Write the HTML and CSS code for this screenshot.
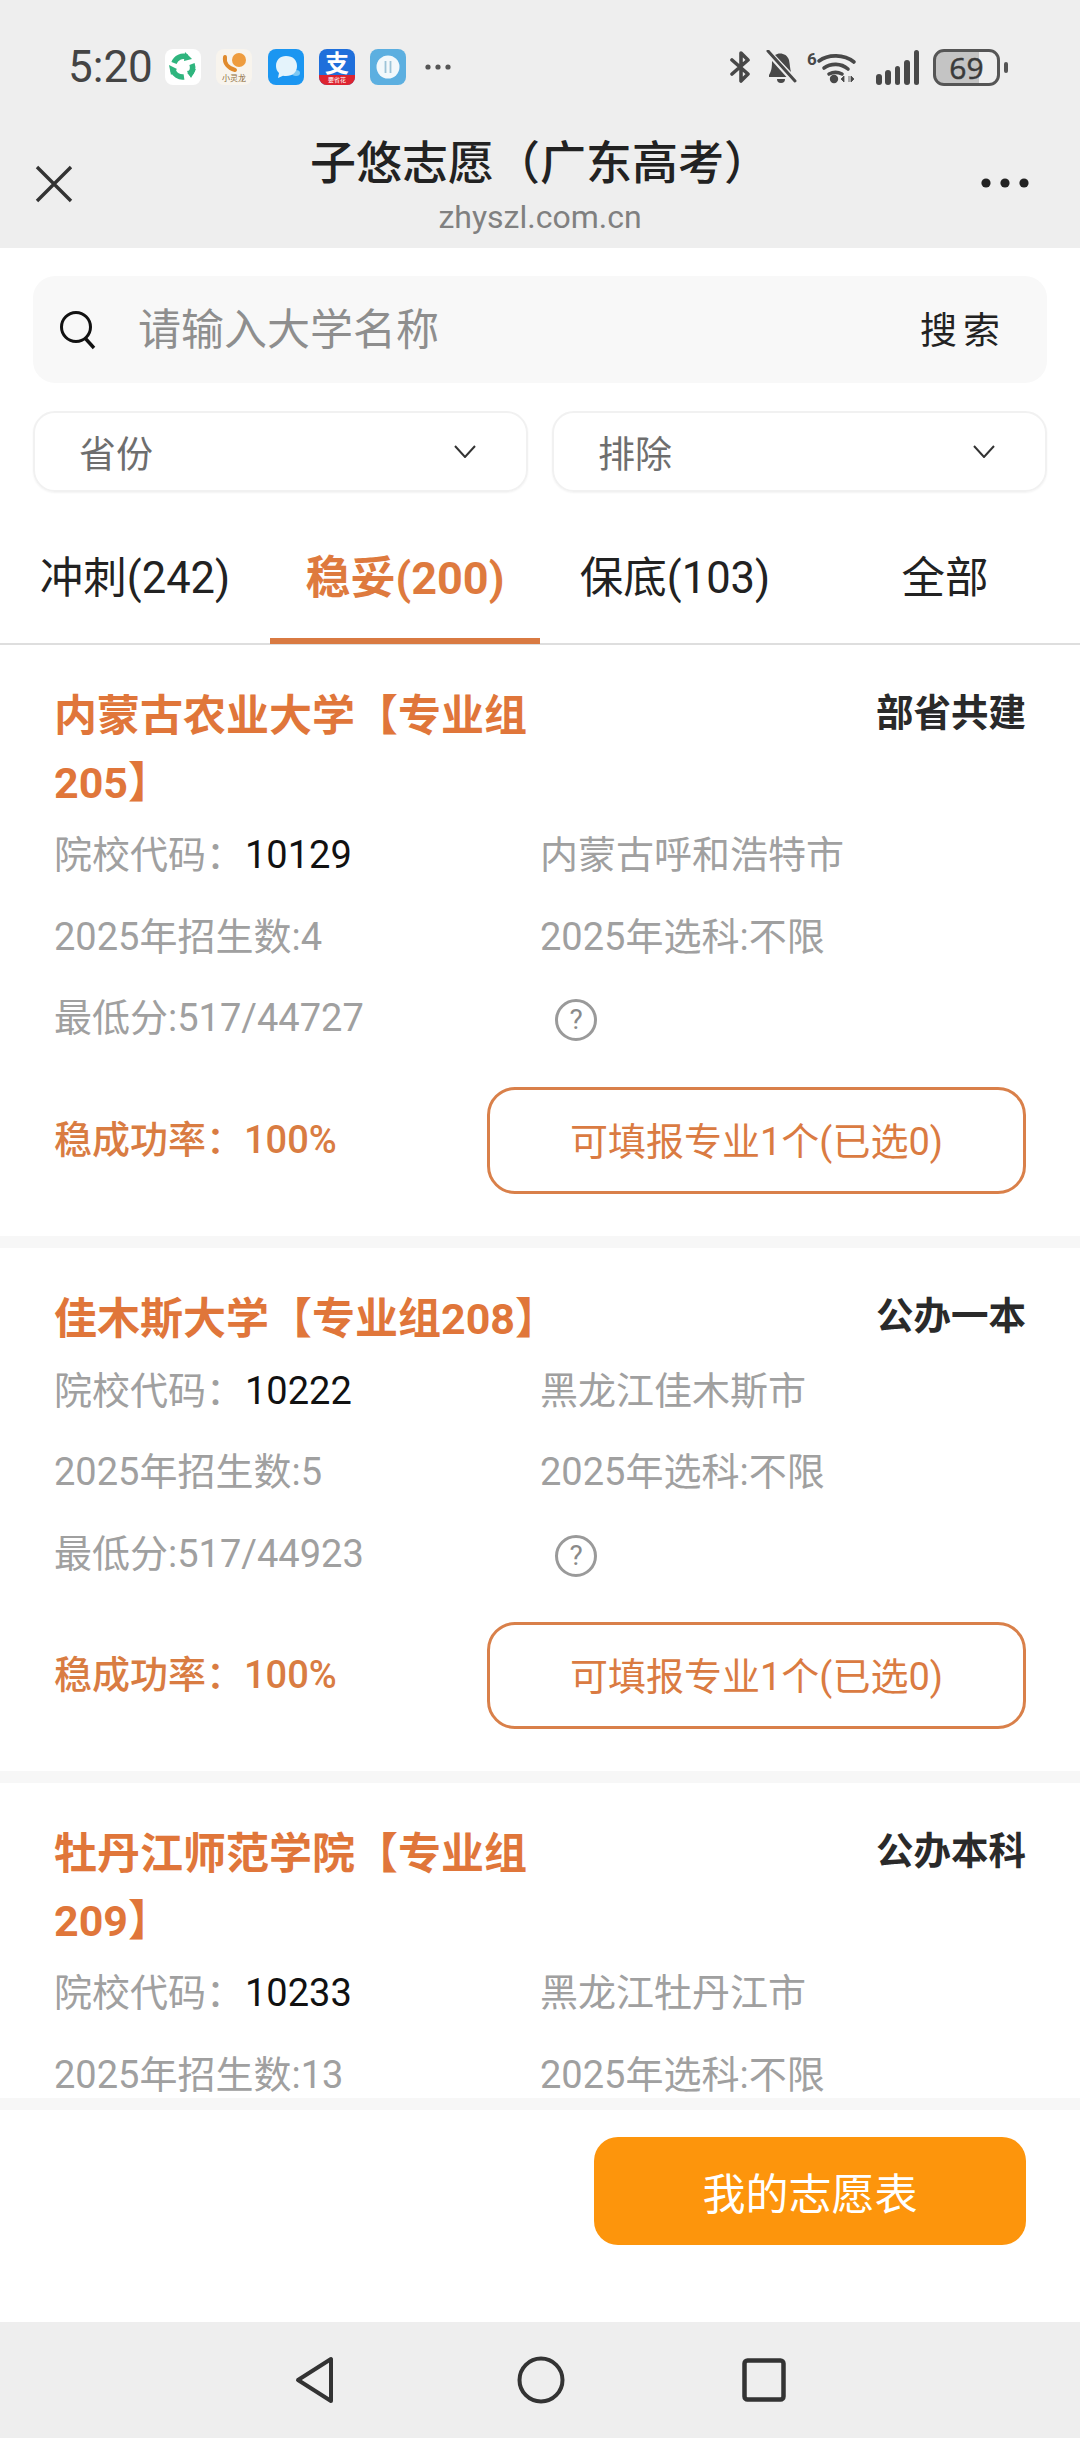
FILE: index.html
```html
<!DOCTYPE html>
<html lang="zh-CN">
<head>
    <meta charset="UTF-8">
    <meta name="viewport" content="width=device-width, initial-scale=1.0">
    <title>子悠志愿（广东高考）</title>
    <link rel="stylesheet" href="styles.css">
</head>
<body>
<div class="page">
    <header class="topbar">
        <div class="status">
            <span class="time">5:20</span>
            <div class="apps">
                <svg class="app" viewBox="0 0 36 36"><rect width="36" height="36" rx="8" fill="#fff"/><g fill="none" stroke="#2fb57e" stroke-width="5.5"><path d="M9 14a10 10 0 0 1 13-6"/><path d="M27 15a10 10 0 0 1-3 11"/><path d="M19 28a10 10 0 0 1-11-7"/></g><g fill="#2fb57e"><path d="M20 3l7 7-8 2z"/><path d="M31 20l-5 9-4-7z"/><path d="M6 26l-2-10 8 4z"/></g></svg>
                <svg class="app" viewBox="0 0 36 36"><rect width="36" height="36" rx="8" fill="#f8f4ed"/><circle cx="23" cy="11" r="7" fill="#ee9c3e"/><path d="M9 8c-1 6 3 11 10 13" fill="none" stroke="#e08a2c" stroke-width="4" stroke-linecap="round"/><text class="app-tiny" x="18" y="32">小灵龙</text></svg>
                <svg class="app" viewBox="0 0 36 36"><rect width="36" height="36" rx="8" fill="#1b96f1"/><ellipse cx="28" cy="24" rx="4" ry="3" fill="#7cc8f4"/><path d="M18 7c7 0 11 4 11 10s-4 10-11 10c-1 0-2 0-3-.3L10 29l1-5c-2-2-3-4-3-7C8 11 12 7 18 7z" fill="#e4f3fb"/></svg>
                <svg class="app" viewBox="0 0 36 36"><rect width="36" height="36" rx="8" fill="#1f6fdb"/><path d="M0 26h36v2a8 8 0 0 1-8 8H8a8 8 0 0 1-8-8z" fill="#dd2430"/><text class="app-zhi" x="18" y="23">支</text><text class="app-small" x="18" y="33">要省花</text></svg>
                <svg class="app" viewBox="0 0 36 36"><rect width="36" height="36" rx="8" fill="#5cafe0"/><circle cx="18" cy="18" r="11.5" fill="#f2f8fb"/><path d="M15.5 24V12M20.5 12v12" stroke="#9cc3d8" stroke-width="1.8"/></svg>
                <svg class="app-more" viewBox="0 0 26 6"><circle cx="3" cy="3" r="2.6"/><circle cx="13" cy="3" r="2.6"/><circle cx="23" cy="3" r="2.6"/></svg>
            </div>
            <div class="sys">
                <svg class="ic-bt" viewBox="0 0 24 32"><path d="M3 9l16 14-7 7V2l7 7L3 23" fill="none" stroke="#484848" stroke-width="3.6" stroke-linejoin="round" stroke-linecap="round"/></svg>
                <svg class="ic-bell" viewBox="0 0 32 34"><path d="M10 5c4-3 12-2 14 5 1 5 1 9 2 12z" fill="#484848"/><path d="M5 8l2 2c0 6 0 10-3 15v2h19z" fill="#484848"/><path d="M12 29h8a4 4 0 0 1-8 0z" fill="#484848"/><path d="M3 2l27 30" stroke="#eee" stroke-width="6"/><path d="M3 1l27 30" stroke="#484848" stroke-width="3" stroke-linecap="round"/></svg>
                <svg class="ic-wifi" viewBox="0 0 50 34"><text class="wifi-six" x="0" y="15">6</text><g fill="none" stroke="#484848" stroke-width="3.6" stroke-linecap="round"><path d="M12 11c9-7 25-7 35 1"/><path d="M17 18c7-5 17-5 24 1"/><path d="M22 24c4-2 9-2 13 0"/></g><circle cx="27" cy="29" r="4.2" fill="#484848"/><path d="M37 26v6l-3-3zM42 26v6M44 26v6l3-3z" fill="#484848" stroke="#484848" stroke-width=".8"/></svg>
                <div class="signal">
                    <i class="bar bar1"></i><i class="bar bar2"></i><i class="bar bar3"></i><i class="bar bar4"></i><i class="bar bar5"></i>
                </div>
                <div class="battery"><span class="battery-num">69</span></div>
                <i class="battery-nub"></i>
            </div>
        </div>
        <div class="titlebar">
            <svg class="ic-close" viewBox="0 0 38 38"><path d="M2 2l34 34M36 2L2 36" stroke="#333" stroke-width="3.4"/></svg>
            <div class="titles">
                <div class="title">子悠志愿（广东高考）</div>
                <div class="url">zhyszl.com.cn</div>
            </div>
            <svg class="ic-menu" viewBox="0 0 48 10"><circle cx="5" cy="5" r="4.6"/><circle cx="24" cy="5" r="4.6"/><circle cx="43" cy="5" r="4.6"/></svg>
        </div>
    </header>

    <section class="filters">
        <div class="search">
            <svg class="ic-search" viewBox="0 0 38 40"><circle cx="17" cy="17" r="14.5" fill="none" stroke="#111" stroke-width="3"/><path d="M26 28l9 10" stroke="#111" stroke-width="3.4"/></svg>
            <span class="search-hint">请输入大学名称</span>
            <span class="search-btn">搜索</span>
        </div>
        <div class="selects">
            <div class="select">
                <span>省份</span>
                <svg class="ic-chev" viewBox="0 0 22 13"><path d="M1 1l10 11L21 1" fill="none" stroke="#333" stroke-width="2"/></svg>
            </div>
            <div class="select">
                <span>排除</span>
                <svg class="ic-chev" viewBox="0 0 22 13"><path d="M1 1l10 11L21 1" fill="none" stroke="#333" stroke-width="2"/></svg>
            </div>
        </div>
    </section>

    <nav class="tabs">
        <div class="tab">冲刺(242)</div>
        <div class="tab active">稳妥(200)</div>
        <div class="tab">保底(103)</div>
        <div class="tab">全部</div>
    </nav>

    <main class="list">
        <article class="card">
            <div class="card-head">
                <h2 class="card-title">内蒙古农业大学【专业组205】</h2>
                <span class="card-tag">部省共建</span>
            </div>
            <div class="info">
                <div class="cell">院校代码：<b class="code">10129</b></div>
                <div class="cell">内蒙古呼和浩特市</div>
                <div class="cell">2025年招生数:4</div>
                <div class="cell">2025年选科:不限</div>
                <div class="cell">最低分:517/44727</div>
                <div class="cell"><span class="help">?</span></div>
            </div>
            <div class="card-foot">
                <span class="rate">稳成功率：100%</span>
                <span class="pick"><span class="pick-text">可填报专业1个(已选0)</span></span>
            </div>
        </article>

        <article class="card">
            <div class="card-head">
                <h2 class="card-title">佳木斯大学【专业组208】</h2>
                <span class="card-tag">公办一本</span>
            </div>
            <div class="info">
                <div class="cell">院校代码：<b class="code">10222</b></div>
                <div class="cell">黑龙江佳木斯市</div>
                <div class="cell">2025年招生数:5</div>
                <div class="cell">2025年选科:不限</div>
                <div class="cell">最低分:517/44923</div>
                <div class="cell"><span class="help">?</span></div>
            </div>
            <div class="card-foot">
                <span class="rate">稳成功率：100%</span>
                <span class="pick"><span class="pick-text">可填报专业1个(已选0)</span></span>
            </div>
        </article>

        <article class="card">
            <div class="card-head">
                <h2 class="card-title">牡丹江师范学院【专业组209】</h2>
                <span class="card-tag">公办本科</span>
            </div>
            <div class="info">
                <div class="cell">院校代码：<b class="code">10233</b></div>
                <div class="cell">黑龙江牡丹江市</div>
                <div class="cell">2025年招生数:13</div>
                <div class="cell">2025年选科:不限</div>
            </div>
        </article>
    </main>

    <footer class="bottom">
        <div class="my-list">我的志愿表</div>
    </footer>

    <div class="navbar">
        <svg class="ic-back" viewBox="0 0 42 48"><path d="M37 3v42L4 24z" fill="none" stroke="#333" stroke-width="4" stroke-linejoin="round"/></svg>
        <svg class="ic-home" viewBox="0 0 48 48"><circle cx="24" cy="24" r="21.5" fill="none" stroke="#333" stroke-width="4"/></svg>
        <svg class="ic-recent" viewBox="0 0 44 44"><rect x="2.5" y="2.5" width="39" height="39" rx="3" fill="none" stroke="#333" stroke-width="4.5"/></svg>
    </div>
</div>
</body>
</html>
```

FILE: styles.css
```css
* {
    box-sizing: border-box;
}

html, body {
    margin: 0;
    padding: 0;
    background: #fff;
}

body {
    font-family: Roboto, "Noto Sans CJK SC", sans-serif;
}

.page {
    width: 1080px;
    height: 2438px;
    display: flex;
    flex-direction: column;
    overflow: hidden;
}

/* top grey area */
.topbar {
    height: 248px;
    background: #eeeeee;
    flex: none;
}

.status {
    height: 134px;
    padding: 0 72px 0 68px;
    display: flex;
    align-items: center;
}

.time {
    font-size: 44px;
    color: #444;
    width: 84px;
    white-space: nowrap;
}

.apps {
    display: flex;
    align-items: center;
    gap: 15.3px;
    margin-left: 13px;
}

.app {
    width: 36px;
    height: 36px;
}

.app-tiny {
    font-size: 8px;
    fill: #8a6a3a;
    text-anchor: middle;
}

.app-zhi {
    font-size: 24px;
    font-weight: 700;
    fill: #fff;
    text-anchor: middle;
}

.app-small {
    font-size: 6px;
    fill: #fff;
    text-anchor: middle;
}

.app-more {
    width: 26px;
    height: 6px;
    fill: #555;
    margin-left: 4px;
}

.sys {
    margin-left: auto;
    display: flex;
    align-items: center;
}

.ic-bt {
    width: 24px;
    height: 32px;
}

.ic-bell {
    width: 32px;
    height: 34px;
    margin-left: 12px;
}

.ic-wifi {
    width: 50px;
    height: 34px;
    margin-left: 10px;
}

.wifi-six {
    font-size: 17px;
    font-weight: 700;
    fill: #484848;
}

.signal {
    width: 43px;
    height: 35px;
    margin-left: 19px;
    display: flex;
    align-items: flex-end;
    justify-content: space-between;
}

.bar {
    width: 5.5px;
    background: #484848;
    border-radius: 3px;
}

.bar1 { height: 11px; }
.bar2 { height: 15px; }
.bar3 { height: 19px; }
.bar4 { height: 25px; }
.bar5 { height: 35px; }

.battery {
    width: 67px;
    height: 37px;
    margin-left: 14px;
    border: 3px solid #555;
    border-radius: 11px;
    background: linear-gradient(to right, #c4c4c4 70%, #eee 70%);
    display: flex;
    align-items: center;
    justify-content: center;
}

.battery-num {
    font-family: "Open Sans", sans-serif;
    font-size: 30px;
    line-height: 31px;
    color: #3a3a3a;
    -webkit-text-stroke: 0.5px #3a3a3a;
}

.battery-nub {
    width: 4px;
    height: 11px;
    margin-left: 4px;
    background: #555;
    border-radius: 2px;
}

.titlebar {
    height: 114px;
    display: flex;
    align-items: flex-start;
    padding: 0 51px 0 35px;
}

.ic-close {
    width: 38px;
    height: 38px;
    margin-top: 31px;
    flex: none;
}

.ic-menu {
    width: 48px;
    height: 10px;
    fill: #222;
    margin-top: 44px;
    flex: none;
}

.titles {
    flex: 1;
    text-align: center;
    padding-left: 26px;
}

.title {
    font-size: 46px;
    line-height: 58px;
    font-weight: 500;
    color: #222;
    white-space: nowrap;
}

.url {
    font-size: 32px;
    line-height: 40px;
    margin-top: 5px;
    color: #808080;
}

/* search and selects */
.filters {
    padding: 28px 33px 0 33px;
    flex: none;
}

.search {
    height: 107px;
    background: #f8f8f8;
    border-radius: 22px;
    padding: 0 41px 0 26px;
    display: flex;
    align-items: center;
}

.ic-search {
    width: 38px;
    height: 40px;
    flex: none;
}

.search-hint {
    font-size: 43px;
    color: #8e8e8e;
    margin: 0 0 8px 41px;
}

.search-btn {
    margin: 0 0 4px auto;
    font-size: 37px;
    letter-spacing: 6px;
    color: #222;
}

.selects {
    display: flex;
    gap: 24px;
    margin-top: 28px;
}

.select {
    flex: 1;
    height: 81px;
    border: 2px solid #f1f1f1;
    border-radius: 22px;
    padding: 0 50px 0 44px;
    display: flex;
    align-items: center;
    justify-content: space-between;
    font-size: 37px;
    color: #6e6e6e;
    box-shadow: 0 1px 2px rgba(0, 0, 0, 0.05);
}

.ic-chev {
    width: 22px;
    height: 13px;
}

/* tabs */
.tabs {
    display: flex;
    height: 153px;
    border-bottom: 2px solid #dedede;
    flex: none;
}

.tab {
    width: 270px;
    font-size: 43.5px;
    line-height: 174px;
    text-align: center;
    color: #222;
    white-space: nowrap;
}

.tab.active {
    font-size: 45px;
    color: #de7a3e;
    font-weight: 700;
    border-bottom: 6px solid #d97a42;
    height: 152px;
}

/* result cards */
.list {
    flex: 1;
    min-height: 0;
    overflow: hidden;
}

.card {
    padding: 38px 54px 42px 54px;
    border-bottom: 12px solid #f7f7f7;
}

.card-head {
    display: flex;
    justify-content: space-between;
    align-items: flex-start;
}

.card-title {
    width: 510px;
    margin: 0;
    font-size: 43px;
    line-height: 67px;
    font-weight: 700;
    color: #e0763a;
}

.card-tag {
    font-size: 37.5px;
    line-height: 60px;
    font-weight: 700;
    color: #2a2a2a;
}

.info {
    display: grid;
    grid-template-columns: 486px 1fr;
    grid-auto-rows: 81.5px;
    align-items: center;
    margin-top: -6px;
    font-size: 38px;
    color: #a0a0a0;
}

.code {
    font-weight: 400;
    color: #111;
    margin-left: 1px;
}

.help {
    display: flex;
    align-items: center;
    justify-content: center;
    width: 42px;
    height: 42px;
    margin: 11px 0 0 15px;
    border: 3px solid #9a9a9a;
    border-radius: 50%;
    font-size: 28px;
    line-height: 1;
    color: #8a8a8a;
}

.card-foot {
    display: flex;
    justify-content: space-between;
    align-items: center;
    margin-top: 31px;
}

.rate {
    font-size: 38px;
    font-weight: 500;
    color: #d97c42;
    margin-bottom: 8px;
}

.pick {
    width: 539px;
    height: 107px;
    border: 3px solid #d9804a;
    border-radius: 28px;
    display: flex;
    align-items: center;
    justify-content: center;
    font-size: 38px;
    color: #da7b42;
}

.pick-text {
    margin-bottom: 4px;
}

/* bottom button */
.bottom {
    flex: none;
    height: 224px;
    border-top: 12px solid #f7f7f7;
    padding: 27px 54px 0 0;
    background: #fff;
    display: flex;
    justify-content: flex-end;
}

.my-list {
    width: 432px;
    height: 108px;
    background: #fd950c;
    border-radius: 24px;
    display: flex;
    align-items: center;
    justify-content: center;
    font-size: 43px;
    color: #fff;
}

/* android nav */
.navbar {
    flex: none;
    height: 116px;
    background: #eeeeee;
    display: flex;
    align-items: center;
    justify-content: center;
}

.ic-back {
    width: 42px;
    height: 48px;
}

.ic-home {
    width: 48px;
    height: 48px;
    margin-left: 181px;
}

.ic-recent {
    width: 44px;
    height: 44px;
    margin-left: 177px;
}
```
